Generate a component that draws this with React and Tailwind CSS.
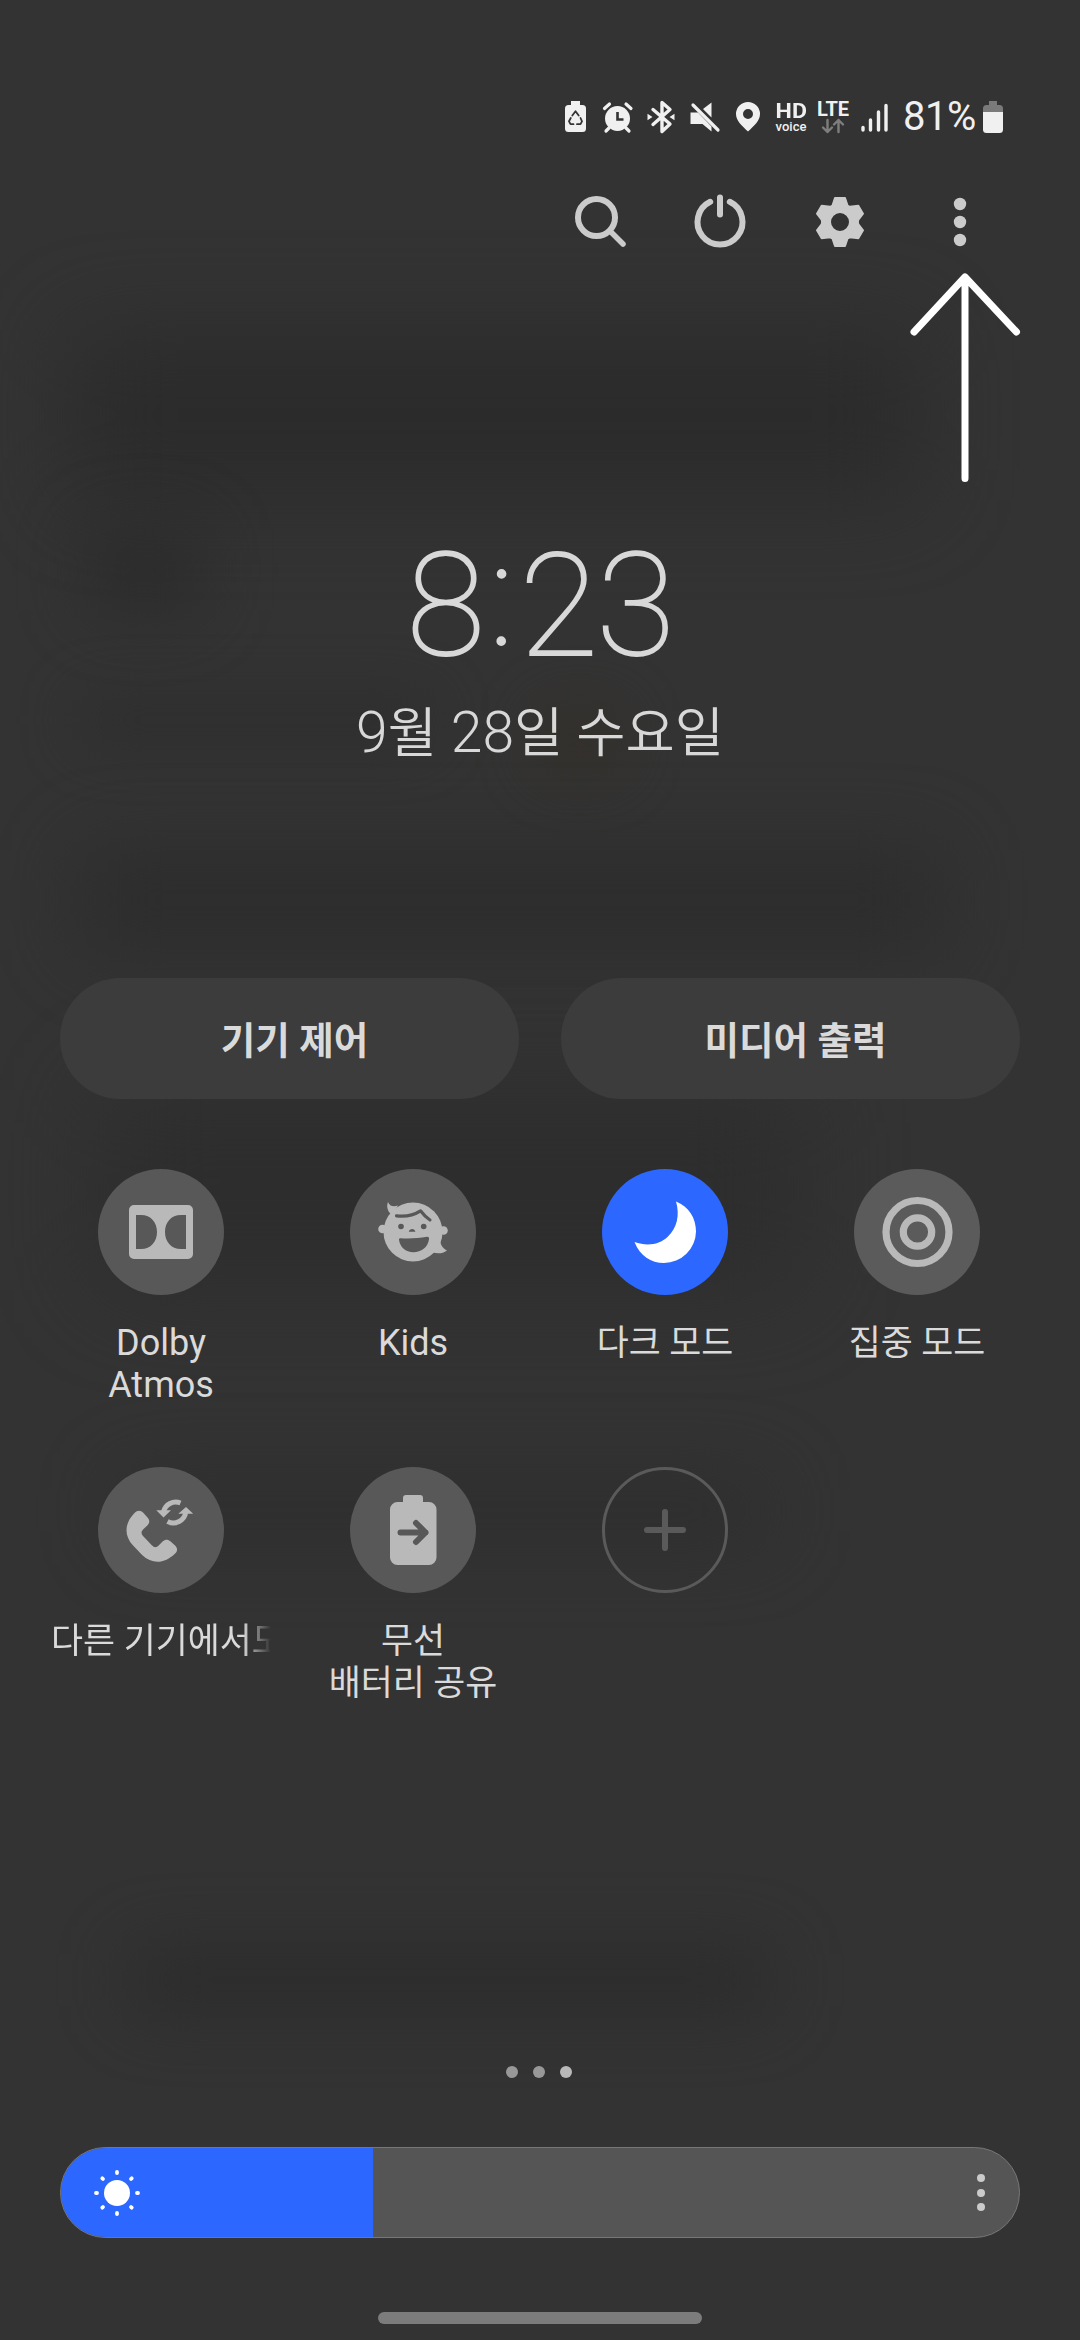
import React from "react";

const TILE_FILL = "#b9b9b9";

/* Status bar glyphs */

const StatusIcons = () => (
  <svg width="200" height="36" viewBox="562 99 200 36" fill="#f0f0f0" className="shrink-0">
    {/* battery saver */}
    <path d="M571 101h9v4h2.500a3.500 3.500 0 0 1 3.500 3.500v20a3.500 3.500 0 0 1-3.500 3.500h-14a3.500 3.500 0 0 1-3.500-3.500v-20a3.500 3.500 0 0 1 3.500-3.500h2.500z" />
    <g fill="none" stroke="#333" strokeWidth="1.800" strokeLinejoin="round" strokeLinecap="round">
      <path d="M572.300 115.500l3.200-4.300 3.200 4.300" />
      <path d="M580.500 118l1.500 3.300-1.500 2.900h-3.500" />
      <path d="M573.500 124.200h-3l-1.500-2.900 1.800-3.300" />
    </g>
    {/* alarm */}
    <circle cx="617.500" cy="118.500" r="12.500" />
    <path d="M604.500 108.500l5-4.500M631 108.500l-5-4.500M609 128l-3 3M626 128l3 3" stroke="#f0f0f0" strokeWidth="3.200" strokeLinecap="round" />
    <path d="M617.500 112v7.500h6" fill="none" stroke="#333" strokeWidth="2.600" />
    {/* bluetooth */}
    <path d="M653 109.500l17 14.500-8 7.500V102.500l8 7-17 15" fill="none" stroke="#f0f0f0" strokeWidth="3.400" strokeLinejoin="round" strokeLinecap="round" />
    <path d="M647.500 113.800l5 3.200-5 3.200zM674.500 113.800l-5 3.200 5 3.200z" />
    {/* muted speaker */}
    <path d="M690.500 112.500h7.500l13.500 14v5l-9-7.500h-12zM703 109l8.500-6.500v15z" />
    <path d="M693 105l25 25" stroke="#f0f0f0" strokeWidth="3.200" strokeLinecap="round" />
    {/* location */}
    <path fillRule="evenodd" d="M748 102a12 12 0 0 1 12 12c0 6.500-6 12-12 17.500-6-5.500-12-11-12-17.500a12 12 0 0 1 12-12zm0 7a5 5 0 1 0 0 10a5 5 0 0 0 0-10z" />
  </svg>
);

const DataArrows = () => (
  <svg width="24" height="16" viewBox="0 0 24 16" fill="none" stroke="#7e7e7e" strokeWidth="2.400" strokeLinecap="round" strokeLinejoin="round">
    <path d="M6.500 2v12M2 9.500l4.500 4.500 4.500-4.500M17.500 14V2M13 6.500L17.500 2 22 6.500" />
  </svg>
);

const Signal = () => (
  <svg width="28" height="30" viewBox="0 0 28 30" stroke="#f0f0f0" strokeWidth="3.400" strokeLinecap="round">
    <path d="M2 25.500v2.500M9.500 18v10M17.500 10v18M25 3.500V28" />
  </svg>
);

const Battery = () => (
  <svg width="20" height="32" viewBox="0 0 20 32">
    <path d="M6 0h8v4h2.500a3.500 3.500 0 0 1 3.500 3.500V11H0V7.500a3.500 3.500 0 0 1 3.500-3.500H6z" fill="#7a7a7a" />
    <path d="M0 11h20v17.500a3.500 3.500 0 0 1-3.500 3.500h-13a3.500 3.500 0 0 1-3.500-3.500z" fill="#f0f0f0" />
  </svg>
);

const StatusBar = () => (
  <div className="h-[36px] mt-[99px] pl-[562px] flex shrink-0 text-[#f0f0f0]">
    <StatusIcons />
    <div className="ml-[12px] w-[34px] pt-[3px] flex flex-col items-center">
      <span className="text-[21px] leading-[19px] font-bold scale-x-110">HD</span>
      <span className="text-[13px] leading-[12px] font-medium">voice</span>
    </div>
    <div className="ml-[8px] w-[34px] pt-[1px] flex flex-col items-center">
      <span className="text-[20px] leading-[18px] font-bold">LTE</span>
      <DataArrows />
    </div>
    <div className="ml-[11px] pt-[3px]">
      <Signal />
    </div>
    <span className="ml-[14px] w-[74px] text-[40px] leading-[35px] tracking-[-0.5px]">81%</span>
    <div className="ml-[6px] pt-[2px]">
      <Battery />
    </div>
  </div>
);

/* Header actions */

const HeaderActions = () => (
  <div className="mt-[56px] pl-[570px] flex gap-[60px] shrink-0">
    <svg width="60" height="60" viewBox="0 0 60 60" fill="none" stroke="#cbcbcb" strokeWidth="6">
      <circle cx="26.500" cy="26.500" r="18.500" />
      <path d="M40 40l13 13" strokeWidth="5.500" strokeLinecap="round" />
    </svg>
    <svg width="60" height="60" viewBox="0 0 60 60" fill="none" stroke="#cbcbcb" strokeWidth="6" strokeLinecap="round">
      <path d="M20.200 10.800a22.500 22.500 0 1 0 19.600 0M30 6.500v17" />
    </svg>
    <svg width="60" height="60" viewBox="-30 -31 60 60" fill="#cbcbcb">
      <path
        fillRule="evenodd"
        stroke="#cbcbcb"
        strokeWidth="2"
        strokeLinejoin="round"
        d="M-5-24H5L7.500-16.500Q8.600-15.500 10-15.200L18.300-16.300 23-8.300 18.200-2Q17.600 0 18.200 2L23 8.300 18.300 16.300 10 15.200Q8.600 15.500 7.500 16.500L5 24H-5L-7.500 16.500Q-8.600 15.500-10 15.200L-18.300 16.300-23 8.300-18.200 2Q-17.600 0-18.200-2L-23-8.300-18.300-16.300-10-15.200Q-8.600-15.500-7.500-16.500ZM0-10A10 10 0 1 0 0 10A10 10 0 1 0 0-10Z"
      />
    </svg>
    <svg width="60" height="60" viewBox="0 0 60 60" fill="#cbcbcb">
      <circle cx="30" cy="13" r="6.200" />
      <circle cx="30" cy="31" r="6.200" />
      <circle cx="30" cy="49" r="6.200" />
    </svg>
  </div>
);

const PointerArrow = () => (
  <svg className="mt-[18px] ml-[906px] shrink-0" width="118" height="216" viewBox="906 269 118 216" fill="none" stroke="#fff" strokeWidth="7" strokeLinecap="round" strokeLinejoin="round">
    <path d="M965 277V478.500M914 332l51-55 51.500 55" />
  </svg>
);

/* Quick setting glyphs, drawn on the 126px button */

const DolbyIcon = () => (
  <path fillRule="evenodd" fill={TILE_FILL} d="M36 36h54a5 5 0 0 1 5 5v44a5 5 0 0 1-5 5H36a5 5 0 0 1-5-5V41a5 5 0 0 1 5-5zM38 46v34h5c10 0 16-7.500 16-17s-6-17-16-17zM88 46v34h-5c-10 0-16-7.500-16-17s6-17 16-17z" />
);

const KidsIcon = () => (
  <>
    <g fill={TILE_FILL}>
      <circle cx="63" cy="63" r="29.500" />
      <circle cx="32.500" cy="60" r="4.300" />
      <circle cx="93.500" cy="61.500" r="4.300" />
      <path d="M42 46c-4-3-6-8-4-13 1.500 4 5 5 10 3.500zM90 69c0 6 2 10 7 12.500-4 3-9 3.500-14 2z" />
    </g>
    <path d="M46.500 46.800c9 1.200 17-.5 24-5 3 4 6 7 9.500 9.200" fill="none" stroke="#585858" strokeWidth="3.200" strokeLinecap="round" strokeLinejoin="round" />
    <g fill="#585858">
      <circle cx="51" cy="57.500" r="2.800" />
      <circle cx="73.700" cy="57.500" r="2.800" />
      <path d="M58.800 62.800c.8-3.600 5.800-3.600 6.600 0zM50.500 69.300c10 .5 18 0 26.500-1.500 2 0 2.300 1 2 2.500-1 8-8 13-15.500 13-8 0-13.500-5-14.500-12.500-.1-1 .5-1.500 1.500-1.500z" />
    </g>
  </>
);

const MoonIcon = () => (
  <path fill="#fff" d="M74 32.500C87 37.500 94 49.500 94 62.500A32 32 0 0 1 62 94C49 94 38 87 32.500 73C45 77.500 57 76 66 67.500C75 59 78 46 74 32.500Z" />
);

const FocusIcon = () => (
  <g fill="none" stroke={TILE_FILL} strokeWidth="7.200">
    <circle cx="63.500" cy="63" r="31.500" />
    <circle cx="63.500" cy="63" r="14.200" />
  </g>
);

const CallSyncIcon = () => (
  <g fill={TILE_FILL}>
    <path d="M36.500 46c3-3 6-3 9 0l4 4.500c2.500 2.800 2.300 5.500-.2 8l-4 3.800c-2.300 2.200-2.300 4.500-.5 6.500l9 9.500c2.500 2.500 4.500 2.500 6.800.3l4-4c2.800-2.500 5.300-2.500 8 0l4.500 4c2.600 2.800 2.600 5.500 0 8-10.500 10.500-23 11-33 1.500l-9-9.500c-9.500-10.500-8.500-22.500 1.400-32.600z" />
    <g fill="none" stroke={TILE_FILL} strokeWidth="5">
      <path d="M82.500 36A12.600 12.600 0 0 0 65.500 45" />
      <path d="M69.500 54.500A12.600 12.600 0 0 0 87.800 45" />
    </g>
    <path d="M58.300 43.300H73L65.500 50.500zM80.300 46.700L88 40 95.200 46.700z" />
  </g>
);

const PowerShareIcon = () => (
  <>
    <path fill={TILE_FILL} d="M56 28h14a3 3 0 0 1 3 3v4h6a7.500 7.500 0 0 1 7.500 7.500v48a7.500 7.500 0 0 1-7.500 7.500H47.500a7.500 7.500 0 0 1-7.500-7.500v-48a7.500 7.500 0 0 1 7.500-7.500H53v-4a3 3 0 0 1 3-3z" />
    <path d="M50.500 65.500H75.500M66 56l9.500 9.500-9.500 9.500" fill="none" stroke="#585858" strokeWidth="6" strokeLinecap="round" strokeLinejoin="round" />
  </>
);

const AddIcon = () => (
  <g fill="none" stroke="#5a5a5a">
    <circle cx="63" cy="63" r="61.500" strokeWidth="3" />
    <path d="M45 63h36M63 45v36" strokeWidth="6" strokeLinecap="round" />
  </g>
);

const LATIN = "text-[36px]";
const HANGUL = "text-[34.8px]";

const tiles = [
  { lines: ["Dolby", "Atmos"], Icon: DolbyIcon, bg: "bg-[#585858]", size: LATIN },
  { lines: ["Kids"], Icon: KidsIcon, bg: "bg-[#585858]", size: LATIN },
  { lines: ["다크 모드"], Icon: MoonIcon, bg: "bg-[#2c67ff]", size: HANGUL },
  { lines: ["집중 모드"], Icon: FocusIcon, bg: "bg-[#5b5b5b]", size: HANGUL },
  { lines: ["다른 기기에서도"], Icon: CallSyncIcon, bg: "bg-[#585858]", size: HANGUL, faded: true },
  { lines: ["무선", "배터리 공유"], Icon: PowerShareIcon, bg: "bg-[#585858]", size: HANGUL },
  { lines: [], Icon: AddIcon, bg: "", size: HANGUL },
];

const Tile = ({ lines, Icon, bg, size, faded }) => (
  <div className="h-[298px] flex flex-col items-center">
    <button className={`w-[126px] h-[126px] rounded-full ${bg}`}>
      <svg width="126" height="126" viewBox="0 0 126 126">
        <Icon />
      </svg>
    </button>
    <div
      className={`mt-[27px] w-[220px] ${size} leading-[42px] text-[#dadada] whitespace-nowrap ${
        faded ? "overflow-hidden text-left [mask-image:linear-gradient(to_right,#000_87%,transparent)]" : "text-center"
      }`}
    >
      {lines.map((line) => (
        <div key={line}>{line}</div>
      ))}
    </div>
  </div>
);

const Brightness = () => (
  <div className="mt-[69px] mx-[60px] h-[91px] shrink-0 rounded-full overflow-hidden border border-[#777] bg-[#555] flex items-center justify-between">
    <div className="w-[312px] h-full bg-[#2c67ff] flex items-center">
      <svg className="ml-[32px]" width="48" height="48" viewBox="-24 -24 48 48">
        <circle r="13" fill="#fff" />
        <path
          d="M0-21v1M0 20v1M-21 0h1M20 0h1M-14.700-14.700l.7.700M14.700-14.700l-.7.700M-14.700 14.700l.7-.7M14.700 14.700l-.7-.7"
          stroke="#fff"
          strokeWidth="3.800"
          strokeLinecap="round"
        />
      </svg>
    </div>
    <div className="mr-[34px] flex flex-col gap-[6.5px]">
      <span className="size-[8px] rounded-full bg-[#cbcbcb]" />
      <span className="size-[8px] rounded-full bg-[#cbcbcb]" />
      <span className="size-[8px] rounded-full bg-[#cbcbcb]" />
    </div>
  </div>
);

/* Blurred remains of the screen behind the panel */
const Backdrop = () => (
  <div className="absolute inset-0">
    <div className="absolute left-[70px] top-[330px] w-[850px] h-[170px] bg-[#2a2a2a] opacity-80 blur-[45px]" />
    <div className="absolute left-[90px] top-[530px] w-[110px] h-[80px] bg-[#292929] opacity-80 blur-[35px]" />
    <div className="absolute left-[80px] top-[700px] w-[350px] h-[40px] bg-[#2b2b2b] opacity-80 blur-[30px]" />
    <div className="absolute left-[540px] top-[710px] w-[80px] h-[60px] bg-[#332e26] opacity-80 blur-[30px]" />
    <div className="absolute left-[80px] top-[850px] w-[860px] h-[100px] bg-[#2b2b2b] opacity-80 blur-[40px]" />
    <div className="absolute left-[100px] top-[1090px] w-[700px] h-[200px] bg-[#2c2c2c] opacity-80 blur-[50px]" />
    <div className="absolute left-[120px] top-[1480px] w-[650px] h-[60px] bg-[#2c2c2c] opacity-80 blur-[40px]" />
    <div className="absolute left-[130px] top-[1950px] w-[640px] h-[60px] bg-[#292929] opacity-80 blur-[35px]" />
  </div>
);

/* Hangul runs a step smaller than the digits beside it */
const Ko = ({ children }) => <span className="text-[53.5px] font-[350]">{children}</span>;

export default function App() {
  return (
    <div className="relative isolate w-[1080px] h-[2340px] overflow-hidden bg-[#333] font-['Roboto','Noto_Sans_CJK_KR',sans-serif]">
      <Backdrop />
      <div className="relative h-full flex flex-col">
        <StatusBar />
        <HeaderActions />
        <PointerArrow />

        {/* Clock */}
        <div className="mt-[36px] h-[170px] shrink-0 flex justify-center text-[143.5px] leading-[170px] font-thin text-[#d8d8d8] [-webkit-text-stroke:1.8px_#d8d8d8]">
          <span>8</span>
          <span className="relative top-[-10px] ml-[4px] mr-[5px]">:</span>
          <span className="tracking-[-1.5px]">23</span>
        </div>
        <div className="mt-[4px] h-[76px] shrink-0 text-center text-[57px] leading-[76px] font-light text-[#d8d8d8] whitespace-nowrap">
          9<Ko>월</Ko> 28<Ko>일 수요일</Ko>
        </div>

        {/* Device and media shortcuts */}
        <div className="mt-[207px] px-[60px] flex gap-[42px] shrink-0 text-[37.5px] font-bold text-[#dadada]">
          <button className="flex-1 h-[121px] pt-[6px] pl-[10px] rounded-full bg-[#3c3c3c]">기기 제어</button>
          <button className="flex-1 h-[121px] pt-[6px] pl-[10px] rounded-full bg-[#3c3c3c]">미디어 출력</button>
        </div>

        {/* Quick settings */}
        <div className="mt-[70px] ml-[35px] w-[1008px] h-[596px] grid grid-cols-4 shrink-0">
          {tiles.map((tile, i) => (
            <Tile key={i} {...tile} />
          ))}
        </div>

        {/* Page dots */}
        <div className="mt-[301px] h-[12px] flex justify-center gap-[15px] shrink-0 pr-[2px]">
          <span className="size-[12px] rounded-full bg-[#989898]" />
          <span className="size-[12px] rounded-full bg-[#989898]" />
          <span className="size-[12px] rounded-full bg-[#b9b9b9]" />
        </div>

        <Brightness />

        {/* Gesture bar */}
        <div className="mt-[74px] mx-auto w-[324px] h-[12px] shrink-0 rounded-full bg-[#7c7c7c]" />
      </div>
    </div>
  );
}
